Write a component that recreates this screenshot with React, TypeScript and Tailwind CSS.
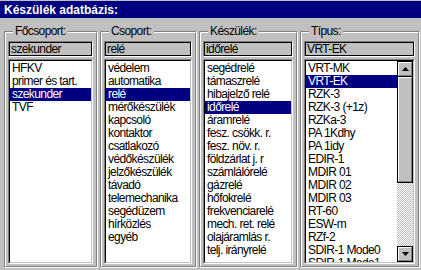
import type { ReactNode } from "react";

// Windows 3.x style database picker: four group boxes with a read-only field and a list

const fokcsoportok = ["HFKV", "primer és tart.", "szekunder", "TVF"];

const csoportok = [
  "védelem",
  "automatika",
  "relé",
  "mérőkészülék",
  "kapcsoló",
  "kontaktor",
  "csatlakozó",
  "védőkészülék",
  "jelzőkészülék",
  "távadó",
  "telemechanika",
  "segédüzem",
  "hírközlés",
  "egyéb",
];

const keszulekek = [
  "segédrelé",
  "támaszrelé",
  "hibajelző relé",
  "időrelé",
  "áramrelé",
  "fesz. csökk. r.",
  "fesz. növ. r.",
  "földzárlat j. r",
  "számlálórelé",
  "gázrelé",
  "hőfokrelé",
  "frekvenciarelé",
  "mech. ret. relé",
  "olajáramlás r.",
  "telj. irányrelé",
];

const tipusok = [
  "VRT-MK",
  "VRT-EK",
  "RZK-3",
  "RZK-3 (+1z)",
  "RZKa-3",
  "PA 1Kdhy",
  "PA 1idy",
  "EDIR-1",
  "MDIR 01",
  "MDIR 02",
  "MDIR 03",
  "RT-60",
  "ESW-m",
  "RZf-2",
  "SDIR-1 Mode0",
  "SDIR-1 Mode1",
];

function Group({ label, className, children }: { label: string; className: string; children: ReactNode }) {
  return (
    <div
      className={`relative h-[237px] border border-t-[#808080] border-l-[#808080] border-r-white border-b-white ${className}`}
    >
      <div className="flex h-full flex-col gap-[2px] border border-t-white border-l-white border-r-[#808080] border-b-[#808080] pt-[8px] pr-[3px] pb-[2px] pl-[2px]">
        {children}
      </div>
      <span className="absolute top-[-7px] left-[8px] bg-[#c0c0c0] px-[2px] leading-[13px]">{label}</span>
    </div>
  );
}

function Field({ value }: { value: string }) {
  return (
    <div className="h-[16px] border border-t-[#808080] border-l-[#808080] border-r-white border-b-white">
      <div className="h-full border border-black pl-[1px] leading-[13px]">{value}</div>
    </div>
  );
}

function ListBox({ items, selected, children }: { items: string[]; selected: number; children?: ReactNode }) {
  return (
    <div className="min-h-0 flex-1 border border-t-[#808080] border-l-[#808080] border-r-white border-b-white">
      <div className="flex h-full overflow-hidden border border-t-black border-l-black border-r-[#c0c0c0] border-b-[#c0c0c0] bg-white">
        <div className="min-w-0 flex-1 pt-[1px]">
          {items.map((item, i) => (
            <div
              key={item}
              className={
                i === selected
                  ? "h-[13px] bg-[#000080] pl-[2px] leading-[13px] whitespace-nowrap text-white"
                  : "h-[13px] pl-[2px] leading-[13px] whitespace-nowrap"
              }
            >
              {item}
            </div>
          ))}
        </div>
        {children}
      </div>
    </div>
  );
}

function ScrollButton({ down }: { down?: boolean }) {
  return (
    <div className="h-[16px] w-[16px] border border-black">
      <div className="flex h-full items-center justify-center border border-t-white border-l-white border-r-[#808080] border-b-[#808080] bg-[#c0c0c0]">
        <svg width="7" height="4" viewBox="0 0 7 4">
          {down ? <polygon points="0,0 7,0 3.5,4" fill="#000" /> : <polygon points="0,4 7,4 3.5,0" fill="#000" />}
        </svg>
      </div>
    </div>
  );
}

function ScrollBar() {
  return (
    <div className="flex w-[16px] flex-col bg-[#c0c0c0]">
      <ScrollButton />
      <div className="h-[106px] border border-black border-t-0">
        <div className="h-full border border-t-white border-l-white border-r-[#808080] border-b-[#808080] bg-[#c0c0c0]" />
      </div>
      <div className="flex-1 bg-[repeating-conic-gradient(#c0c0c0_0_25%,#ffffff_0_50%)] bg-size-[2px_2px]" />
      <ScrollButton down />
    </div>
  );
}

export default function App() {
  return (
    <main className="h-[270px] w-[421px] overflow-hidden bg-[#c0c0c0] pt-[1px] font-['Liberation_Sans',Arial,sans-serif] text-[12px] tracking-[-0.6px] text-black">
      <header className="flex h-[17px] items-center bg-[#000080] pl-[4px] text-[12px] font-bold tracking-normal text-white">
        Készülék adatbázis:
      </header>

      <section className="flex gap-[2px] pt-[13px] pl-[4px]">
        <Group label="Főcsoport:" className="w-[94px]">
          <Field value="szekunder" />
          <ListBox items={fokcsoportok} selected={2} />
        </Group>

        <Group label="Csoport:" className="w-[97px]">
          <Field value="relé" />
          <ListBox items={csoportok} selected={2} />
        </Group>

        <Group label="Készülék:" className="w-[99px]">
          <Field value="időrelé" />
          <ListBox items={keszulekek} selected={3} />
        </Group>

        <Group label="Típus:" className="w-[120px]">
          <Field value="VRT-EK" />
          <ListBox items={tipusok} selected={1}>
            <ScrollBar />
          </ListBox>
        </Group>
      </section>
    </main>
  );
}
